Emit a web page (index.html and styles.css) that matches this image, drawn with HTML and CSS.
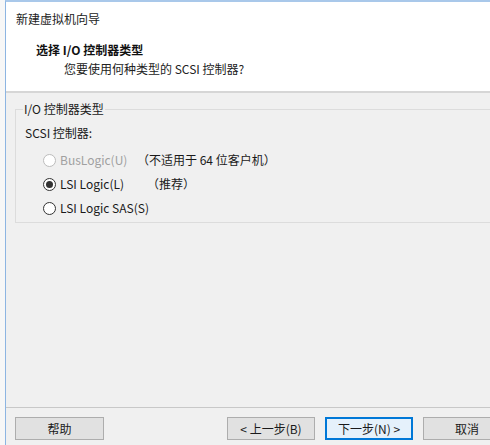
FILE: index.html
```html
<!DOCTYPE html>
<html lang="zh-CN">
<head>
<meta charset="utf-8">
<title>新建虚拟机向导</title>
<link rel="stylesheet" href="styles.css">
</head>
<body>
<div class="frame">
  <div class="strip"></div>
  <div class="window">
    <div class="header">
      <div class="wintitle">新建虚拟机向导</div>
      <div class="h1">选择 I/O 控制器类型</div>
      <div class="h2">您要使用何种类型的 SCSI 控制器?</div>
    </div>
    <div class="content">
      <fieldset class="group">
        <legend class="legend">I/O 控制器类型</legend>
        <div class="sublabel">SCSI 控制器:</div>
        <div class="row disabled">
          <span class="radio"></span>
          <span class="label label-1">BusLogic(U)</span>
          <span class="note">（不适用于 64 位客户机）</span>
        </div>
        <div class="row">
          <span class="radio checked"></span>
          <span class="label label-2">LSI Logic(L)</span>
          <span class="note">（推荐）</span>
        </div>
        <div class="row">
          <span class="radio"></span>
          <span class="label">LSI Logic SAS(S)</span>
        </div>
      </fieldset>
      <div class="spacer"></div>
      <div class="footer">
        <button class="btn btn-help">帮助</button>
        <button class="btn btn-prev">&lt; 上一步(B)</button>
        <button class="btn btn-next">下一步(N) &gt;</button>
        <button class="btn btn-cancel">取消</button>
      </div>
    </div>
  </div>
</div>
</body>
</html>
```

FILE: styles.css
```css
* { box-sizing: border-box; }
html, body {
  margin: 0;
  padding: 0;
  width: 490px;
  height: 445px;
  overflow: hidden;
  background: #f7f7f7;
  font-family: "Noto Sans CJK SC", "Noto Sans", sans-serif;
  font-size: 12px;
  color: #1a1a1a;
}
.frame {
  display: flex;
  height: 445px;
  width: 540px;
}
.strip {
  width: 5px;
  flex: none;
  background: #f7f7f7;
}
.window {
  flex: 1;
  display: flex;
  flex-direction: column;
  border-left: 1px solid #8db5e2;
  border-top: 2px solid #a9c8ea;
  background: #f0f0f0;
}
.header {
  height: 91px;
  flex: none;
  background: #ffffff;
  border-bottom: 2px solid #d6d6d6;
  padding: 9px 0 0 10px;
  line-height: 16px;
}
.wintitle { color: #222; }
.h1 {
  margin: 15px 0 0 20px;
  font-weight: bold;
  color: #111;
}
.h2 {
  margin: 3px 0 0 48px;
  color: #222;
}
.content {
  flex: 1;
  display: flex;
  flex-direction: column;
}
.group {
  margin: 8px 0 0 9px;
  padding: 0 0 2px 9px;
  border: 1px solid #dcdcdc;
  min-width: 0;
  line-height: 16px;
}
.legend {
  padding: 0 1px;
  margin-left: -2px;
  color: #1a1a1a;
}
.sublabel {
  margin-top: 8px;
}
.row {
  height: 24px;
  display: flex;
  align-items: center;
}
.sublabel + .row { margin-top: 7px; }
.radio {
  width: 13px;
  height: 13px;
  border-radius: 50%;
  border: 1px solid #333;
  background: #fff;
  margin-left: 18px;
  margin-right: 4px;
  flex: none;
  display: flex;
  align-items: center;
  justify-content: center;
}
.radio.checked::after {
  content: "";
  width: 7px;
  height: 7px;
  border-radius: 50%;
  background: #333;
}
.disabled .radio { border-color: #bcbcbc; }
.disabled .label { color: #a0a0a0; }
.label-1 { width: 77px; }
.label-2 { width: 87px; }
.spacer { flex: 1; }
.footer {
  flex: none;
  border-top: 1px solid #c8c8c8;
  height: 38px;
  padding: 9px 0 0 9px;
  display: flex;
  align-items: flex-start;
}
.btn {
  height: 23px;
  width: 88px;
  border: 1px solid #adadad;
  background: #e1e1e1;
  font-family: inherit;
  font-size: 12px;
  color: #1a1a1a;
  padding: 0;
  flex: none;
}
.btn-help { width: 89px; }
.btn-prev { margin-left: 123px; }
.btn-next {
  margin-left: 10px;
  border: 2px solid #0078d7;
  background: #e5f1fb;
}
.btn-cancel { margin-left: 10px; }
```
